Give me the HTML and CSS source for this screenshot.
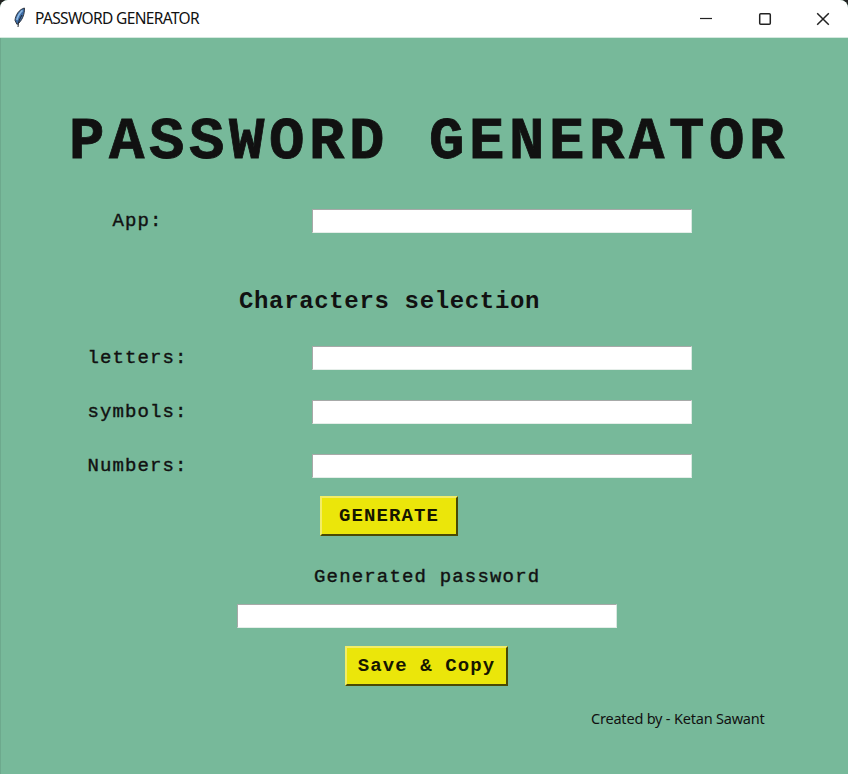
FILE: index.html
```
<!DOCTYPE html>
<html lang="en">
<head>
<meta charset="utf-8">
<title>PASSWORD GENERATOR</title>
<link rel="stylesheet" href="styles.css">
</head>
<body>
<div class="window">
  <header class="titlebar">
    <svg class="feather" width="14" height="22" viewBox="0 0 14 22" aria-hidden="true">
      <path d="M11.4 1C6 2.4 2.4 8.2 2 13.4L4 17.4C9 14.5 12 6.5 11.4 1Z" fill="#3c6ba5" stroke="#303640" stroke-width="1"/>
      <path d="M9.5 3.4C7.2 5.4 5 9 3.8 13" fill="none" stroke="#8fbbe5" stroke-width="1.6"/>
      <path d="M9 8C7 11 5.2 15 5 20" fill="none" stroke="#20252d" stroke-width="1"/>
    </svg>
    <span class="caption">PASSWORD GENERATOR</span>
    <div class="controls">
      <svg width="14" height="14" viewBox="0 0 14 14"><path d="M1 6.5H13"/></svg>
      <svg width="14" height="14" viewBox="0 0 14 14"><rect class="max" x="1.7" y="1.7" width="10.6" height="10.6" rx="1"/></svg>
      <svg width="14" height="14" viewBox="0 0 14 14"><path class="close" d="M1.2 1.2L12.8 12.8M12.8 1.2L1.2 12.8"/></svg>
    </div>
  </header>
  <main class="content">
    <h1>PASSWORD GENERATOR</h1>
    <div class="row app"><label for="app">App:</label><input id="app"></div>
    <h2>Characters selection</h2>
    <div class="row"><label for="letters">letters:</label><input id="letters"></div>
    <div class="row"><label for="symbols">symbols:</label><input id="symbols"></div>
    <div class="row"><label for="numbers">Numbers:</label><input id="numbers"></div>
    <button class="generate">GENERATE</button>
    <label class="result-label" for="result">Generated password</label>
    <input class="result" id="result">
    <button class="save">Save &amp; Copy</button>
    <footer>Created by - Ketan Sawant</footer>
  </main>
</div>
</body>
</html>
```
FILE: styles.css
```
* { box-sizing: border-box; }
body { margin: 0; background: #222; color: #111; }
.window {
  width: 848px;
  height: 774px;
  display: flex;
  flex-direction: column;
  overflow: hidden;
  border-radius: 8px 8px 0 0;
  background: #77b99a;
}
.titlebar {
  height: 38px;
  flex: none;
  display: flex;
  align-items: center;
  padding: 0 18px 0 13px;
  background: #fff;
  border-bottom: 1px solid #d5e9df;
}
.feather { margin-top: -2px; }
.caption {
  margin: -2px 0 0 8px;
  font: 15.5px/20px "Noto Sans", sans-serif;
  white-space: nowrap;
  width: 166px;
  letter-spacing: -0.65px;
}
.controls { margin-left: auto; display: flex; gap: 44.5px; }
.controls svg { fill: none; stroke: #222; stroke-width: 1.2; }
.controls .max, .controls .close { stroke-width: 1.5; }
.content {
  flex: 1;
  display: flex;
  flex-direction: column;
  align-items: flex-start;
  border-left: 1px solid #6da98d;
  font-family: "Liberation Mono", monospace;
}
h1 {
  margin: 70px 0 0 68px;
  height: 68px;
  font-size: 59px;
  line-height: 70px;
  letter-spacing: 4.6px;
  white-space: nowrap;
  -webkit-text-stroke: 0.8px #111;
}
h2 {
  margin: 55px 0 31px 238px;
  font-size: 24px;
  line-height: 28px;
  letter-spacing: 0.65px;
}
label, button {
  font-size: 19px;
  font-weight: 700;
  line-height: 24px;
  letter-spacing: 1.1px;
  white-space: nowrap;
}
.row {
  display: grid;
  grid-template-columns: 311px 380px;
  height: 24px;
  margin-bottom: 30px;
}
.row label { width: 273px; text-align: center; font-weight: 400; -webkit-text-stroke: 0.4px #111; }
.row.app { margin: 33px 0 0; }
input {
  width: 380px;
  height: 24px;
  padding: 0 2px;
  background: #fff;
  border: 1px solid;
  border-color: #a7a9a8 #d9e8e1 #e5eee9 #a7a9a8;
  border-radius: 0;
  outline: 0;
}
h2 + .row { margin-top: -1px; }
button {
  height: 40px;
  padding: 0;
  font-family: inherit;
  color: #161600;
  background: #ebe60a;
  border: 2px solid;
  border-color: #f3ed65 #4a4905 #4a4905 #f3ed65;
  border-radius: 0;
}
.generate { width: 138px; margin: -12px 0 29px 319px; }
.result-label { margin: 0 0 15px 313px; font-weight: 400; letter-spacing: 1.17px; -webkit-text-stroke: 0.4px #111; }
.result { margin-left: 236px; }
.save { width: 163px; margin: 18px 0 21px 344px; }
footer {
  margin-left: 590px;
  font: 14.5px/22px "Noto Sans", sans-serif;
  letter-spacing: -0.2px;
}
```
